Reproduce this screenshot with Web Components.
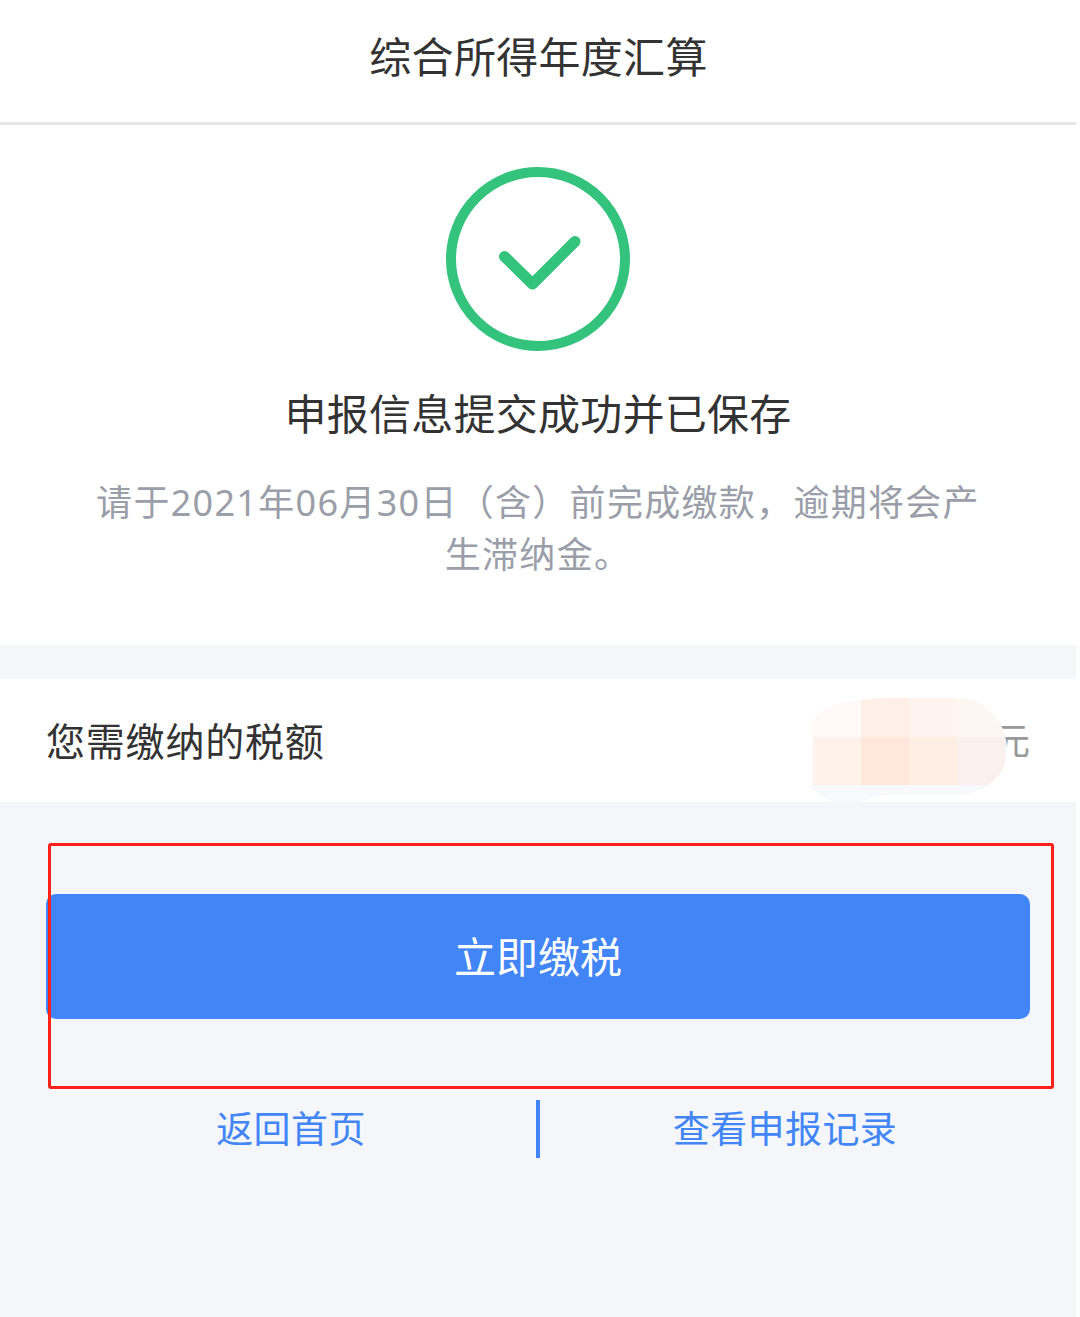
<!DOCTYPE html>
<html lang="zh-CN">
<head>
  <meta charset="UTF-8">
  <title>综合所得年度汇算</title>
  <style>
    body {
      margin: 0;
      background: #fff;
      font-family: "Noto Sans CJK SC", sans-serif;
    }
  </style>
</head>
<body>
  <tax-page>
    <page-header>综合所得年度汇算</page-header>
    <result-panel>
      <span slot="title">申报信息提交成功并已保存</span>
      请于2021年06月30日（含）前完成缴款，逾期将会产生滞纳金。
    </result-panel>
    <amount-row unit="元">您需缴纳的税额</amount-row>
    <action-area>
      <primary-button>立即缴税</primary-button>
    </action-area>
    <link-bar>
      <span slot="left">返回首页</span>
      <span slot="right">查看申报记录</span>
    </link-bar>
  </tax-page>

  <script>
    class TaxPage extends HTMLElement {
      constructor() {
        super()
        this.attachShadow({ mode: 'open' })
      }

      connectedCallback() {
        this.shadowRoot.innerHTML = `
          <style>
            :host {
              display: flex;
              flex-direction: column;
              width: 1076px;
              height: 1317px;
              overflow: hidden;
              background: #f4f6fa;
              color: #333;
              --blue: #4285f6;
            }
          </style>
          <slot></slot>
        `
      }
    }

    class PageHeader extends HTMLElement {
      constructor() {
        super()
        this.attachShadow({ mode: 'open' })
      }

      connectedCallback() {
        this.shadowRoot.innerHTML = `
          <style>
            :host {
              display: block;
              box-sizing: border-box;
              height: 125px;
              padding: 24px 0 0 1px;
              background: #fff;
              border-bottom: 3px solid #e4e4e9;
              font-size: 42px;
              line-height: 62px;
              letter-spacing: 0.3px;
              text-align: center;
            }
          </style>
          <slot></slot>
        `
      }
    }

    class ResultPanel extends HTMLElement {
      constructor() {
        super()
        this.attachShadow({ mode: 'open' })
      }

      connectedCallback() {
        this.shadowRoot.innerHTML = `
          <style>
            :host {
              display: flex;
              flex-direction: column;
              align-items: center;
              box-sizing: border-box;
              height: 520px;
              padding-top: 42px;
              background: #fff;
            }

            svg {
              display: block;
              width: 184px;
              height: 184px;
            }

            h1 {
              margin: 30px 0 0;
              font-size: 42px;
              font-weight: 400;
              line-height: 62px;
              letter-spacing: 0.25px;
            }

            p {
              width: 900px;
              margin: 34px 0 0;
              color: #9a9ea8;
              font-family: "Noto Sans", "Noto Sans CJK SC", sans-serif;
              font-size: 36px;
              line-height: 52px;
              letter-spacing: 1.3px;
              text-align: center;
            }
          </style>
          <svg viewBox="0 0 184 184" fill="none" stroke="#33c37d" stroke-width="10">
            <circle cx="92" cy="92" r="87"/>
            <path d="M58.5 89.5 86.5 117 129 74.5" stroke-width="11" stroke-linecap="round" stroke-linejoin="round"/>
          </svg>
          <h1><slot name="title"></slot></h1>
          <p><slot></slot></p>
        `
      }
    }

    class AmountRow extends HTMLElement {
      constructor() {
        super()
        this.attachShadow({ mode: 'open' })
      }

      get unit() {
        return this.getAttribute('unit') || ''
      }

      connectedCallback() {
        this.shadowRoot.innerHTML = `
          <style>
            :host {
              display: flex;
              align-items: center;
              justify-content: space-between;
              position: relative;
              box-sizing: border-box;
              height: 123px;
              margin-top: 34px;
              padding: 0 46px 4px;
              background: #fff;
              font-size: 39px;
              letter-spacing: 0.8px;
            }

            .unit {
              color: #999;
              font-size: 37px;
              letter-spacing: 0;
            }

            .mask {
              position: absolute;
              left: 808px;
              top: 18px;
              width: 200px;
              height: 108px;
            }
          </style>
          <span><slot></slot></span>
          <span class="unit">${this.unit}</span>
          <svg class="mask" viewBox="808 697 200 108">
            <clipPath id="blob">
              <path d="M809 785H813V719C823 709 834 703 848 702C866 699 878 698 890 698H957C985 698 1007 722 1007 750C1007 776 984 795 957 795H893C865 795 871 803 846 803C830 803 818 796 809 785Z"/>
            </clipPath>
            <g clip-path="url(#blob)" shape-rendering="crispEdges">
              <path fill="#f7f9fc" d="M808 697h200v108h-200z"/>
              <path fill="#fffaf7" d="M813 697h48v40h-48z"/>
              <path fill="#fff0e7" d="M861 697h48v40h-48z"/>
              <path fill="#fff4ef" d="M909 697h48v40h-48z"/>
              <path fill="#fdf7f1" d="M957 697h48v40h-48z"/>
              <path fill="#fff2ea" d="M813 737h48v48h-48z"/>
              <path fill="#ffe8db" d="M861 737h48v48h-48z"/>
              <path fill="#ffeee4" d="M909 737h48v48h-48z"/>
              <path fill="#fbf1ec" d="M957 737h48v48h-48z"/>
            </g>
          </svg>
        `
      }
    }

    class ActionArea extends HTMLElement {
      constructor() {
        super()
        this.attachShadow({ mode: 'open' })
      }

      connectedCallback() {
        this.shadowRoot.innerHTML = `
          <style>
            :host {
              display: block;
              position: relative;
              padding: 92px 46px 81px;
            }

            /* highlight frame drawn over the button */
            .frame {
              position: absolute;
              left: 48px;
              top: 41px;
              box-sizing: border-box;
              width: 1006px;
              height: 246px;
              border: 3px solid #ff2018;
              border-radius: 3px;
            }
          </style>
          <slot></slot>
          <div class="frame"></div>
        `
      }
    }

    class PrimaryButton extends HTMLElement {
      constructor() {
        super()
        this.attachShadow({ mode: 'open' })
      }

      connectedCallback() {
        this.shadowRoot.innerHTML = `
          <style>
            :host {
              display: block;
            }

            button {
              display: block;
              width: 100%;
              height: 125px;
              padding: 0 0 5px;
              border: 0;
              border-radius: 10px;
              background: var(--blue);
              color: #fff;
              font: inherit;
              font-size: 42px;
            }
          </style>
          <button><slot></slot></button>
        `
      }
    }

    class LinkBar extends HTMLElement {
      constructor() {
        super()
        this.attachShadow({ mode: 'open' })
      }

      connectedCallback() {
        this.shadowRoot.innerHTML = `
          <style>
            :host {
              display: grid;
              grid-template-columns: 1fr 4px 1fr;
              height: 58px;
              margin: 0 46px;
              color: var(--blue);
              font-size: 37px;
              letter-spacing: 0.4px;
              line-height: 54px;
              text-align: center;
            }

            i {
              height: 100%;
              background: var(--blue);
            }
          </style>
          <slot name="left"></slot>
          <i></i>
          <slot name="right"></slot>
        `
      }
    }

    customElements.define('tax-page', TaxPage)
    customElements.define('page-header', PageHeader)
    customElements.define('result-panel', ResultPanel)
    customElements.define('amount-row', AmountRow)
    customElements.define('action-area', ActionArea)
    customElements.define('primary-button', PrimaryButton)
    customElements.define('link-bar', LinkBar)
  </script>
</body>
</html>
